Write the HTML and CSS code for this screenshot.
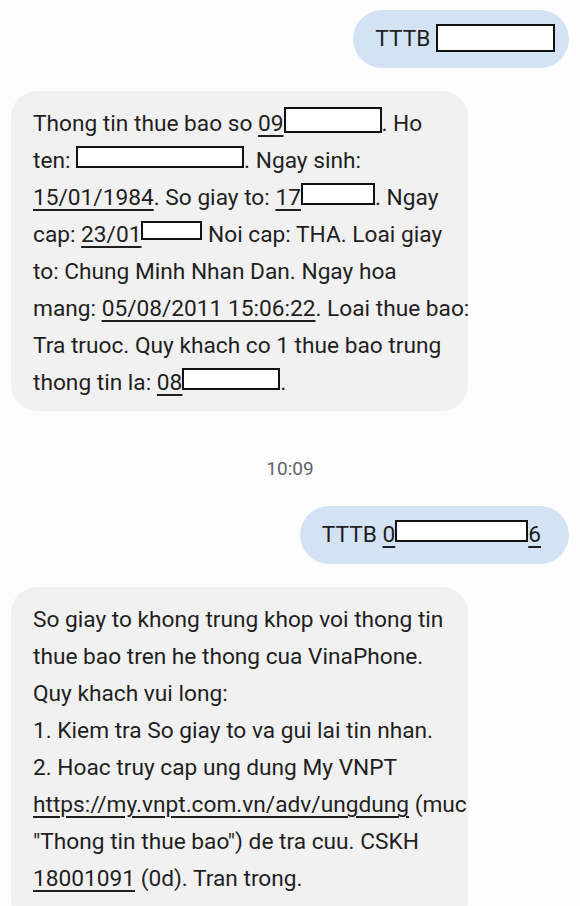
FILE: index.html
```html
<!DOCTYPE html>
<html lang="vi">
<head>
  <meta charset="UTF-8" />
  <title>Tin nhan</title>
  <link rel="stylesheet" href="styles.css">
</head>
<body>
  <div class="thread">
    <div class="bubble sent">TTTB <span class="redact r-sent1"></span></div>

    <div class="bubble received">
      Thong tin thue bao so <span class="u">09<span class="redact r-phone"></span></span>. Ho<br>
      ten: <span class="redact r-name"></span>. Ngay sinh:<br>
      <span class="u">15/01/1984</span>. So giay to: <span class="u">17<span class="redact r-id"></span></span>. Ngay<br>
      cap: <span class="u">23/01<span class="redact r-date"></span></span> Noi cap: THA. Loai giay<br>
      to: Chung Minh Nhan Dan. Ngay hoa<br>
      mang: <span class="u">05/08/2011 15:06:22</span>. Loai thue bao:<br>
      Tra truoc. Quy khach co 1 thue bao trung<br>
      thong tin la: <span class="u">08<span class="redact r-other"></span></span>.
    </div>

    <div class="time">10:09</div>

    <div class="bubble sent sent-wide">TTTB <span class="u">0<span class="redact r-sent2"></span>6</span></div>

    <div class="bubble received last">
      So giay to khong trung khop voi thong tin<br>
      thue bao tren he thong cua VinaPhone.<br>
      Quy khach vui long:<br>
      1. Kiem tra So giay to va gui lai tin nhan.<br>
      2. Hoac truy cap ung dung My VNPT<br>
      <span class="u">https://my.vnpt.com.vn/adv/ungdung</span> (muc<br>
      "Thong tin thue bao") de tra cuu. CSKH<br>
      <span class="u">18001091</span> (0d). Tran trong.
    </div>
  </div>
</body>
</html>
```

FILE: styles.css
```css
body {
  margin: 0;
  background: #fdfdfd;
  color: #1f1f1f;
  font-family: Roboto, "Noto Sans", sans-serif;
  overflow: hidden;
}
.thread {
  display: flex;
  flex-direction: column;
  padding: 10px 11px 0 11px;
}
.bubble {
  font-size: 22.7px;
  line-height: 37px;
}
.sent {
  align-self: flex-end;
  background: #d3e3f3;
  border-radius: 29px;
  height: 58px;
  box-sizing: border-box;
  padding: 10px 14px 0 22px;
  white-space: nowrap;
}
.sent-wide {
  padding-right: 28px;
}
.received {
  align-self: flex-start;
  width: 457px;
  box-sizing: border-box;
  background: #f1f1f1;
  border-radius: 26px;
  padding: 14px 10px 10px 22px;
  margin-top: 23px;
  white-space: nowrap;
}
.received.last {
  padding-bottom: 30px;
}
.u {
  text-decoration: underline;
  text-decoration-thickness: 1.5px;
  text-underline-offset: 4px;
}
.redact {
  display: inline-block;
  box-sizing: border-box;
  background: #fff;
  border: 2px solid #111;
  height: 22px;
}
.r-sent1 { width: 119px; height: 28px; vertical-align: -6px; }
.r-sent2 { width: 133px; }
.r-phone { width: 98px; height: 26px; vertical-align: -2px; }
.r-name { width: 168px; }
.r-id { width: 74px; }
.r-date { width: 61px; height: 19px; vertical-align: 2px; }
.r-other { width: 98px; }
.time {
  align-self: center;
  margin: 46px 0 26px 0;
  font-size: 19px;
  color: #5f6368;
}
```
